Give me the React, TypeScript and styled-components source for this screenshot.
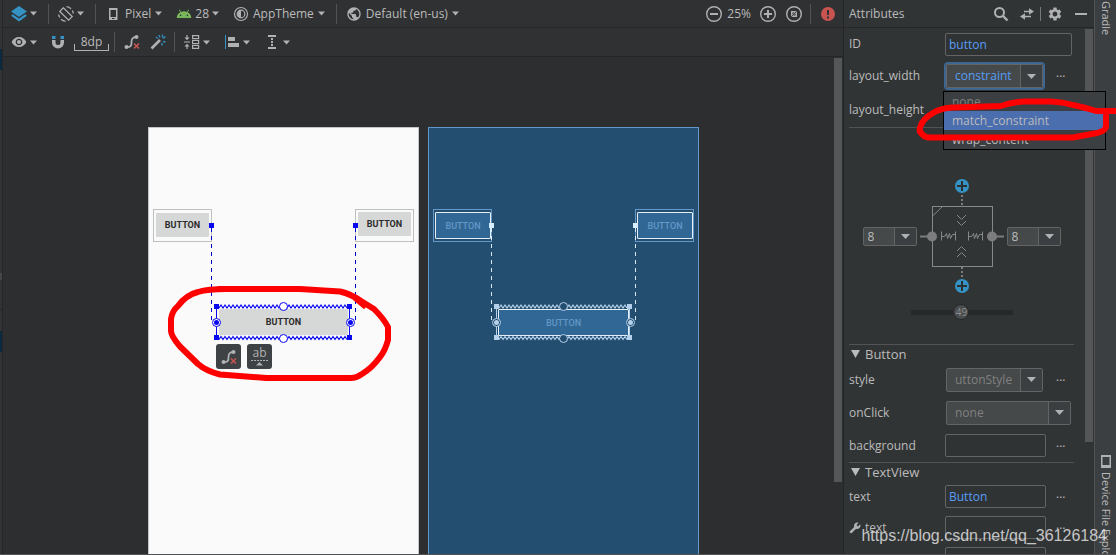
import React from "react";
import styled, { createGlobalStyle } from "styled-components";
import { MdAndroid, MdPublic, MdSettings, MdVisibility, MdBuild } from "react-icons/md";

const Global = createGlobalStyle`
  * { box-sizing: border-box; }
  body { margin: 0; background: #2d2e30; }
  button, input, select { font: inherit; color: inherit; margin: 0; }
  ul { list-style: none; margin: 0; padding: 0; }
`;

const font = `"Open Sans", "Noto Sans", sans-serif`;

const Shell = styled.div`
  position: relative;
  display: grid;
  grid-template-columns: 3px minmax(0, 1fr) 251px 22px;
  grid-template-rows: minmax(0, 1fr);
  height: 100vh;
  overflow: hidden;
  border-bottom: 1px solid #515355;
  font-family: ${font};
  font-size: 12px;
  line-height: 18px;
  color: #bbbbbb;
`;

/* ---------- left edge ---------- */

const Edge = styled.div`
  display: flex;
  flex-direction: column;
  background: #313335;
  border-right: 1px solid #252627;
`;

const EdgeBlock = styled.div<{ $h: number; $bg?: string }>`
  flex: none;
  height: ${(p) => p.$h}px;
  background: ${(p) => p.$bg ?? "transparent"};
`;

/* ---------- editor ---------- */

const Editor = styled.main`
  display: flex;
  flex-direction: column;
  min-width: 0;
  background: #2d2e30;
`;

const Toolbar = styled.div<{ $h: number }>`
  display: flex;
  align-items: center;
  flex: none;
  height: ${(p) => p.$h}px;
  padding-left: 8px;
  background: #2f3133;
  border-bottom: 1px solid #252627;
`;

const ToolButton = styled.button<{ $after?: number; $label?: boolean }>`
  display: inline-flex;
  align-items: center;
  flex: none;
  gap: ${(p) => (p.$label ? 4 : 3)}px;
  padding: 0;
  margin-right: ${(p) => p.$after ?? 0}px;
  border: 0;
  background: none;
  color: #bbbbbb;
  white-space: nowrap;
`;

const Separator = styled.span<{ $tight?: boolean }>`
  flex: none;
  width: 1px;
  height: 20px;
  margin: 0 9px 0 ${(p) => (p.$tight ? 8 : 11)}px;
  background: #515355;
`;

const Spacer = styled.span`
  flex: 1;
`;

const Glyph = styled.svg`
  display: block;
  flex: none;
  width: 16px;
  height: 16px;
`;

const CaretSvg = styled.svg`
  display: block;
  flex: none;
  width: 7px;
  height: 5px;
`;

const GridSize = styled.button`
  position: relative;
  width: 35px;
  height: 18px;
  padding: 0;
  margin: 0 -6px 0 0;
  border: 0;
  background: none;
  color: #bbbbbb;
  line-height: 14px;
  text-align: center;
  &::after {
    content: "";
    position: absolute;
    inset: auto 0 0 0;
    height: 6px;
    border: 1px solid #afb1b3;
    border-top: 0;
  }
`;

const ZoomGroup = styled.div`
  display: flex;
  align-items: center;
  gap: 5px;
  margin-right: 9px;
`;

const Caret = () => (
  <CaretSvg viewBox="0 0 7 5" aria-hidden="true">
    <path d="M0 0.5h7L3.5 4.5z" fill="#afb1b3" />
  </CaretSvg>
);

const Surface = styled.div`
  position: relative;
  flex: 1;
  min-height: 0;
  display: flex;
  justify-content: center;
  align-items: stretch;
  gap: 9px;
  padding: 70px 0 0 1px;
  overflow: hidden;
`;

const SurfaceScroll = styled.div`
  position: absolute;
  top: 1px;
  right: 1px;
  width: 8px;
  height: 424px;
  background: #545658;
`;

const Device = styled.section<{ $blue?: boolean }>`
  position: relative;
  flex: none;
  width: 271px;
  background: ${(p) => (p.$blue ? "#234e6f" : "#fafafa")};
  border: 1px solid ${(p) => (p.$blue ? "#6498c8" : "#c4c4c4")};
  border-bottom: 0;
`;

const Overlay = styled.svg`
  position: absolute;
  top: -1px;
  left: -1px;
  width: 271px;
  height: 428px;
  overflow: visible;
  pointer-events: none;
`;

const Widget = styled.button<{ $x: number; $y: number; $w: number; $h: number; $blue?: boolean }>`
  position: absolute;
  left: ${(p) => p.$x}px;
  top: ${(p) => p.$y}px;
  width: ${(p) => p.$w}px;
  height: ${(p) => p.$h}px;
  padding: 0;
  border: ${(p) => (p.$blue ? "1px solid #e6eef8" : "0")};
  border-radius: 1px;
  background: ${(p) => (p.$blue ? "#316795" : "#d6d7d7")};
  color: ${(p) => (p.$blue ? "#6498c8" : "#2b2b2b")};
  font-family: Roboto, sans-serif;
  font-size: 9px;
  font-weight: ${(p) => (p.$blue ? 500 : 700)};
  line-height: 12px;
  text-align: center;
`;

const ActionBar = styled.div`
  position: absolute;
  left: 67px;
  top: 216px;
  display: flex;
  gap: 6px;
`;

const Action = styled.button`
  display: grid;
  place-items: center;
  width: 25px;
  height: 25px;
  padding: 0;
  border: 0;
  border-radius: 3px;
  background: #3e4244;
  color: #afb1b3;
`;

const Baseline = styled.span`
  display: block;
  width: 17px;
  height: 19px;
  font-size: 12px;
  line-height: 12px;
  text-align: center;
`;

const BaselineSvg = styled.svg`
  display: block;
  width: 17px;
  height: 7px;
`;

const zigzag = (x1: number, x2: number, y: number) => {
  let d = `M${x1} ${y + 1.5}`;
  let up = true;
  for (let x = x1 + 2; x <= x2; x += 2) {
    d += `L${x} ${up ? y - 1.5 : y + 1.5}`;
    up = !up;
  }
  return d;
};

const Constraints = ({ blue }: { blue?: boolean }) => {
  const main = blue ? "#b4d0ea" : "#0808f0";
  const frame = blue ? "#6498c8" : "#bfbfbf";
  const wire = blue ? "#d8ecff" : "#0000c8";
  const hole = blue ? "#234e6f" : "#ffffff";
  return (
    <Overlay viewBox="0 0 271 428" aria-hidden="true">
      <g fill="none" stroke={frame}>
        <rect x="5.5" y="82.5" width="58" height="32" />
        <rect x="207.5" y="82.5" width="58" height="32" />
      </g>
      <g fill="none" stroke={wire} strokeDasharray="4 4">
        <path d="M63.5 101V195.5H66" />
        <path d="M207.5 101V195.5H205" />
      </g>
      <g fill={blue ? "#d8ecff" : "#0808f0"}>
        <rect x="61" y="96" width="5" height="5" />
        <rect x="205" y="96" width="5" height="5" />
      </g>
      <g fill="none" stroke={main} strokeWidth="1.2">
        <path d={zigzag(71, 199, 179.5)} />
        <path d={zigzag(71, 199, 211)} />
      </g>
      <g fill="none" stroke={main}>
        <path d="M68.5 180V211M201.5 180V211" />
      </g>
      <g fill={main}>
        <rect x="66" y="177" width="5" height="5" />
        <rect x="199" y="177" width="5" height="5" />
        <rect x="66" y="208" width="5" height="5" />
        <rect x="199" y="208" width="5" height="5" />
      </g>
      <g fill={hole} stroke={main}>
        <circle cx="135.5" cy="179.5" r="4" />
        <circle cx="135.5" cy="211.5" r="4" />
        <circle cx="68.5" cy="195.5" r="4" />
        <circle cx="202.5" cy="195.5" r="4" />
      </g>
      <g fill={main}>
        <circle cx="68.5" cy="195.5" r="2.5" />
        <circle cx="202.5" cy="195.5" r="2.5" />
      </g>
    </Overlay>
  );
};

const ClearConstraints = () => (
  <Glyph viewBox="0 0 16 16" aria-hidden="true">
    <path d="M2.5 13C7.5 13.5 7.5 11 7.5 8S8 3 13 3" fill="none" stroke="#afb1b3" strokeWidth="1.8" />
    <circle cx="2.5" cy="13" r="2" fill="#afb1b3" />
    <circle cx="12.5" cy="3" r="2" fill="#afb1b3" />
    <path d="M10 9.5l5 5M15 9.5l-5 5" stroke="#c75450" strokeWidth="1.6" />
  </Glyph>
);

/* ---------- attributes ---------- */

const Panel = styled.aside`
  position: relative;
  z-index: 1;
  display: flex;
  flex-direction: column;
  min-width: 0;
  background: #313435;
  border-left: 1px solid #252627;
`;

const PanelHead = styled.header`
  display: flex;
  align-items: center;
  flex: none;
  height: 28px;
  padding: 0 5px;
  border-bottom: 1px solid #252627;
`;

const PanelTitle = styled.h2`
  flex: 1;
  margin: 0;
  font-size: 12px;
  font-weight: 400;
`;

const HeadRule = styled.span`
  width: 1px;
  height: 14px;
  margin-right: 6px;
  background: #77797b;
`;

const PanelBody = styled.div`
  flex: 1;
  min-height: 0;
  padding: 0 20px 0 5px;
`;

const PanelScroll = styled.div`
  position: absolute;
  top: 29px;
  right: 1px;
  width: 8px;
  height: 413px;
  background: #545658;
`;

const Group = styled.section`
  border-bottom: 1px solid #515355;
`;

const GroupTitle = styled.h3`
  display: flex;
  align-items: center;
  gap: 5px;
  height: 18px;
  margin: 0;
  padding-left: 2px;
  font-size: 13px;
  font-weight: 400;
`;

const Row = styled.div<{ $h: number }>`
  position: relative;
  display: grid;
  grid-template-columns: 96px 101px minmax(0, 1fr);
  align-items: center;
  height: ${(p) => p.$h}px;
`;

const RowLabel = styled.label`
  display: flex;
  align-items: center;
  gap: 4px;
`;

const TextField = styled.input<{ $wide?: boolean }>`
  grid-column: ${(p) => (p.$wide ? "2 / 4" : "2")};
  width: ${(p) => (p.$wide ? 127 : 101)}px;
  height: 23px;
  padding: 0 3px;
  border: 1px solid #646464;
  border-radius: 2px;
  background: #2f3334;
  color: #589df6;
  outline: none;
`;

const Combo = styled.div<{ $w: number; $h?: number; $focus?: boolean; $inset?: boolean }>`
  position: relative;
  z-index: ${(p) => (p.$focus ? 3 : "auto")};
  flex: none;
  width: ${(p) => p.$w}px;
  height: ${(p) => p.$h ?? 24}px;
  margin-left: ${(p) => (p.$inset ? 1 : 0)}px;
  border-radius: 2px;
  box-shadow: ${(p) => (p.$focus ? "0 0 0 2px #3d6691" : "none")};
`;

const Select = styled.select<{ $muted?: boolean; $blue?: boolean; $pad?: number }>`
  appearance: none;
  display: block;
  width: 100%;
  height: 100%;
  padding: 0 24px 0 ${(p) => p.$pad ?? 8}px;
  border: 1px solid #646464;
  border-radius: 2px;
  background: #45494a;
  color: ${(p) => (p.$blue ? "#589df6" : p.$muted ? "#808080" : "#bbbbbb")};
  outline: none;
`;

const Drop = styled.span`
  position: absolute;
  top: 1px;
  right: 1px;
  bottom: 1px;
  display: grid;
  place-items: center;
  width: 22px;
  border-left: 1px solid #646464;
  background: #3c3f41;
  pointer-events: none;
`;

const DropArrow = () => (
  <Drop>
    <svg width="9" height="5" viewBox="0 0 9 5" aria-hidden="true">
      <path d="M0 0h9L4.5 5z" fill="#afb1b3" />
    </svg>
  </Drop>
);

const More = styled.button`
  justify-self: start;
  margin-left: 10px;
  padding: 0 0 6px;
  border: 0;
  background: none;
  color: #bbbbbb;
  line-height: 12px;
`;

const Menu = styled.ul`
  position: absolute;
  top: 27px;
  left: -3px;
  width: 163px;
  border: 1px solid #000000;
  background: #3c3f41;
`;

const MenuItem = styled.li<{ $state?: "muted" | "active" }>`
  height: 19px;
  padding-left: 8px;
  line-height: 19px;
  color: ${(p) => (p.$state === "muted" ? "#808080" : "#bbbbbb")};
  background: ${(p) => (p.$state === "active" ? "#4b6eaf" : "transparent")};
`;

const MenuMark = styled.svg`
  position: absolute;
  top: 27px;
  left: -33px;
  width: 203px;
  height: 59px;
  overflow: visible;
  pointer-events: none;
`;

const Inspector = styled.div`
  display: flex;
  flex-direction: column;
  align-items: center;
  gap: 10px;
  padding: 50px 0 24px;
  border-bottom: 1px solid #515355;
`;

const InspectorRow = styled.div`
  display: flex;
  align-items: center;
`;

const BiasBox = styled.div`
  position: relative;
  display: grid;
  place-items: center;
  width: 102px;
  height: 16px;
`;

const Bias = styled.input`
  appearance: none;
  width: 100%;
  height: 16px;
  background: linear-gradient(#262829, #262829) center / 100% 5px no-repeat;
  outline: none;
  &::-webkit-slider-thumb {
    appearance: none;
    width: 16px;
    height: 16px;
    border: 1px solid #262829;
    border-radius: 50%;
    background: #4a4d4e;
  }
`;

const BiasValue = styled.output`
  position: absolute;
  inset: 0;
  color: #8c8e8f;
  font-size: 10px;
  line-height: 17px;
  text-align: center;
  pointer-events: none;
`;

/* ---------- right edge ---------- */

const Dock = styled.nav`
  display: flex;
  flex-direction: column;
  align-items: center;
  gap: 420px;
  padding-top: 1px;
  background: #3c3f41;
  border-left: 1px solid #515355;
  overflow: hidden;
`;

const DockTab = styled.button`
  display: flex;
  align-items: center;
  flex: none;
  gap: 4px;
  padding: 0;
  border: 0;
  background: none;
  color: #bbbbbb;
  font-size: 11px;
  line-height: 20px;
  writing-mode: vertical-rl;
  white-space: nowrap;
`;

const Watermark = styled.span`
  position: absolute;
  z-index: 5;
  right: 9px;
  bottom: 8px;
  color: rgba(225, 225, 225, 0.85);
  font-family: "Liberation Sans", Arial, sans-serif;
  font-size: 16px;
  line-height: 20px;
  pointer-events: none;
`;

const PlusBadge = ({ y }: { y: number }) => (
  <g>
    <circle cx="45" cy={y} r="7" fill="#3592c4" />
    <path d={`M45 ${y - 5}v10M40 ${y}h10`} stroke="#2b3033" strokeWidth="2" />
  </g>
);

const Margin = ({ label }: { label: string }) => (
  <Combo $w={54} $h={19}>
    <Select aria-label={label} $pad={4} defaultValue="8">
      <option>8</option>
      <option>16</option>
    </Select>
    <DropArrow />
  </Combo>
);

const Triangle = () => (
  <svg width="9" height="8" viewBox="0 0 9 8" aria-hidden="true">
    <path d="M0 0h9L4.5 8z" fill="#bbbbbb" />
  </svg>
);

export default function App() {
  return (
    <>
      <Global />
      <Shell>
        <Edge>
          <EdgeBlock $h={49} />
          <EdgeBlock $h={21} $bg="#0d293e" />
          <EdgeBlock $h={203} />
          <EdgeBlock $h={7} $bg="#45484a" />
          <EdgeBlock $h={29} />
          <EdgeBlock $h={1} $bg="#252627" />
          <EdgeBlock $h={21} />
          <EdgeBlock $h={21} $bg="#0d293e" />
        </Edge>

        <Editor>
          <Toolbar $h={28}>
            <ToolButton aria-label="Design surface">
              <Glyph viewBox="0 0 16 16">
                <path d="M8 0L16 5.5 8 11 0 5.5z" fill="#3592c4" />
                <path d="M1.8 8.2L0 9.8 8 15.5l8-5.7-1.8-1.6L8 12.5z" fill="#3592c4" />
              </Glyph>
              <Caret />
            </ToolButton>
            <Separator />
            <ToolButton aria-label="Orientation">
              <Glyph viewBox="0 0 16 16" fill="none" stroke="#afb1b3" strokeWidth="1.3">
                <path d="M5.4 1.8L1.8 5.4 10.6 14.2 14.2 10.6z" />
                <path d="M8.5 0.7a7.3 7.3 0 0 1 4.5 2M14.3 4.5a7.3 7.3 0 0 1 1 3M7.5 15.3a7.3 7.3 0 0 1-4.5-2M1.7 11.5a7.3 7.3 0 0 1-1-3" />
              </Glyph>
              <Caret />
            </ToolButton>
            <Separator />
            <ToolButton $label $after={14}>
              <Glyph viewBox="0 0 16 16">
                <path d="M4 2h8.5v12H4zM5.5 4v7h5.5V4z" fill="#afb1b3" fillRule="evenodd" />
                <path d="M7 12.5h2.5" stroke="#2f3133" />
              </Glyph>
              <span>Pixel</span>
              <Caret />
            </ToolButton>
            <ToolButton $after={14}>
              <Glyph as="span">
                <MdAndroid size={16} color="#78b85a" />
              </Glyph>
              <span>28</span>
              <Caret />
            </ToolButton>
            <ToolButton $label>
              <Glyph viewBox="0 0 16 16">
                <circle cx="8" cy="8" r="6.5" fill="none" stroke="#afb1b3" strokeWidth="1.2" />
                <circle cx="8" cy="8" r="3.8" fill="none" stroke="#afb1b3" strokeWidth="1.2" />
                <path d="M8 4.2a3.800 3.800 0 0 0 0 7.600z" fill="#afb1b3" />
              </Glyph>
              <span>AppTheme</span>
              <Caret />
            </ToolButton>
            <Separator />
            <ToolButton $label>
              <Glyph as="span">
                <MdPublic size={16} color="#afb1b3" />
              </Glyph>
              <span>Default (en-us)</span>
              <Caret />
            </ToolButton>
            <Spacer />
            <ZoomGroup>
              <ToolButton aria-label="Zoom out">
                <Glyph viewBox="0 0 16 16" fill="none" stroke="#afb1b3" strokeWidth="1.4">
                  <circle cx="8" cy="8" r="7.3" />
                  <path d="M4 8h8" strokeWidth="2" />
                </Glyph>
              </ToolButton>
              <span>25%</span>
            </ZoomGroup>
            <ToolButton aria-label="Zoom in" $after={10}>
              <Glyph viewBox="0 0 16 16" fill="none" stroke="#afb1b3" strokeWidth="1.4">
                <circle cx="8" cy="8" r="7.3" />
                <path d="M4 8h8M8 4v8" strokeWidth="2" />
              </Glyph>
            </ToolButton>
            <ToolButton aria-label="Zoom to fit">
              <Glyph viewBox="0 0 16 16">
                <circle cx="8" cy="8" r="7.3" fill="none" stroke="#afb1b3" strokeWidth="1.4" />
                <path d="M5 5h5.5L5 10.5zM11 5.5V11H5.5z" fill="#afb1b3" />
                <path d="M6.5 6.5h2l-2 2zM9.5 7.5v2h-2z" fill="#2f3133" />
              </Glyph>
            </ToolButton>
            <Separator $tight />
            <ToolButton aria-label="Errors" $after={7}>
              <Glyph viewBox="0 0 16 16">
                <circle cx="8" cy="8" r="7" fill="#c75450" />
                <path d="M8 4v5M8 10.5v2" stroke="#2f3133" strokeWidth="2" />
              </Glyph>
            </ToolButton>
          </Toolbar>

          <Toolbar $h={29}>
            <ToolButton aria-label="View options" $after={13}>
              <Glyph as="span">
                <MdVisibility size={16} color="#afb1b3" />
              </Glyph>
              <Caret />
            </ToolButton>
            <ToolButton aria-label="Autoconnect" $after={8}>
              <Glyph viewBox="0 0 16 16">
                <path d="M2 6v2.5a6 6 0 0 0 12 0V6h-3.5v2.5a2.5 2.5 0 0 1-5 0V6z" fill="#afb1b3" />
                <path d="M2 2h3.5v3H2zM10.5 2H14v3h-3.5z" fill="#3592c4" />
              </Glyph>
            </ToolButton>
            <GridSize>8dp</GridSize>
            <Separator />
            <ToolButton aria-label="Clear constraints" $after={10}>
              <ClearConstraints />
            </ToolButton>
            <ToolButton aria-label="Infer constraints">
              <Glyph viewBox="0 0 16 16">
                <path d="M1.5 14.5L10 6" stroke="#afb1b3" strokeWidth="2.6" />
                <path d="M9 1l1 2.5M12.5 0.5v3M15.5 2.5l-2.5 2M13 7.5l2.5 0.5M11.5 9l1 2.5M6 3l2 1.5" stroke="#3592c4" strokeWidth="1.3" />
              </Glyph>
            </ToolButton>
            <Separator $tight />
            <ToolButton aria-label="Pack" $after={14}>
              <Glyph viewBox="0 0 16 16">
                <path d="M3 1v3M3 15v-3M0 8h6" stroke="#afb1b3" strokeWidth="1.2" />
                <path d="M0.5 3.5h5L3 6.2zM0.5 12.5h5L3 9.8z" fill="#afb1b3" />
                <path d="M8.6 1.6h6v3h-6zM8.6 6.5h6v3h-6zM8.6 11.4h6v3h-6z" fill="none" stroke="#afb1b3" strokeWidth="1.2" />
              </Glyph>
              <Caret />
            </ToolButton>
            <ToolButton aria-label="Align" $after={14}>
              <Glyph viewBox="0 0 16 16">
                <path d="M1.5 1v14" stroke="#3592c4" />
                <path d="M4 3h7v4H4zM4 9h11v4H4z" fill="#afb1b3" />
              </Glyph>
              <Caret />
            </ToolButton>
            <ToolButton aria-label="Guidelines">
              <Glyph viewBox="0 0 16 16">
                <path d="M4 2h8M4 14h8" stroke="#afb1b3" strokeWidth="2" />
                <path d="M8 4v9" stroke="#afb1b3" strokeWidth="2" strokeDasharray="2 1" />
              </Glyph>
              <Caret />
            </ToolButton>
          </Toolbar>

          <Surface>
            <Device aria-label="Design">
              <Widget $x={7} $y={85} $w={53} $h={24}>BUTTON</Widget>
              <Widget $x={209} $y={84} $w={53} $h={24}>BUTTON</Widget>
              <Widget $x={70} $y={181} $w={129} $h={26}>BUTTON</Widget>
              <Constraints />
              <ActionBar>
                <Action aria-label="Clear constraints">
                  <ClearConstraints />
                </Action>
                <Action aria-label="Edit baseline">
                  <Baseline>
                    ab
                    <BaselineSvg viewBox="0 0 17 7">
                      <path d="M0 1.5h17" stroke="#afb1b3" strokeDasharray="2 1" />
                      <path d="M8.5 3L12 6.5H5z" fill="#afb1b3" />
                    </BaselineSvg>
                  </Baseline>
                </Action>
              </ActionBar>
              <Overlay viewBox="0 0 271 428" aria-hidden="true">
                <path
                  d="M70 162H152L192 164.5Q203 167 213 174L226 182Q236 192 240 200V213Q237 224 232 230Q224 241 214 247Q208 251 203 251H118L72 247.5Q58 244 50 237L32 219.5Q23 209 23 204V192Q24 184 30 179Q38 168 50 165Q60 162 78 162M205 169L218 180"
                  fill="none"
                  stroke="#ff0000"
                  strokeWidth="6"
                  strokeLinejoin="round"
                />
              </Overlay>
            </Device>
            <Device $blue aria-label="Blueprint">
              <Widget $blue $x={6} $y={84} $w={56} $h={27}>BUTTON</Widget>
              <Widget $blue $x={208} $y={84} $w={56} $h={27}>BUTTON</Widget>
              <Widget $blue $x={69} $y={181} $w={131} $h={27}>BUTTON</Widget>
              <Constraints blue />
            </Device>
            <SurfaceScroll />
          </Surface>
        </Editor>

        <Panel>
          <PanelHead>
            <PanelTitle>Attributes</PanelTitle>
            <ToolButton aria-label="Search" $after={10}>
              <Glyph viewBox="0 0 16 16" fill="none" stroke="#afb1b3">
                <circle cx="6.5" cy="6.5" r="4.5" strokeWidth="2" />
                <path d="M10 10l4.5 4.5" strokeWidth="2.4" />
              </Glyph>
            </ToolButton>
            <ToolButton aria-label="Swap view" $after={5}>
              <Glyph viewBox="0 0 16 16">
                <path d="M5 5.5h6M5 10.5h7" fill="none" stroke="#afb1b3" strokeWidth="1.6" />
                <path d="M10 2.2L15 5.5l-5 3.3zM6 7.2L1 10.5l5 3.3z" fill="#afb1b3" />
              </Glyph>
            </ToolButton>
            <HeadRule />
            <ToolButton aria-label="Settings" $after={10}>
              <Glyph as="span">
                <MdSettings size={16} color="#afb1b3" />
              </Glyph>
            </ToolButton>
            <ToolButton aria-label="Hide">
              <Glyph viewBox="0 0 16 16">
                <path d="M2 8h12" stroke="#afb1b3" strokeWidth="2" />
              </Glyph>
            </ToolButton>
          </PanelHead>

          <PanelBody>
            <Group>
              <Row $h={32}>
                <RowLabel htmlFor="id">ID</RowLabel>
                <TextField id="id" $wide defaultValue="button" />
              </Row>
              <Row $h={32}>
                <RowLabel htmlFor="width">layout_width</RowLabel>
                <Combo $w={97} $focus $inset>
                  <Select id="width" $blue defaultValue="constraint">
                    <option>constraint</option>
                  </Select>
                  <DropArrow />
                  <Menu role="listbox" aria-label="layout_width">
                    <MenuItem role="option" $state="muted">none</MenuItem>
                    <MenuItem role="option" aria-selected="true" $state="active">match_constraint</MenuItem>
                    <MenuItem role="option">wrap_content</MenuItem>
                  </Menu>
                  <MenuMark viewBox="0 0 203 59" aria-hidden="true">
                    <path
                      d="M206 20H183Q170 16 160 14Q150 11 138 10.5H112Q100 11 88 15L40 16.5Q28 17 20 22Q10 28 8 34Q5 40 9 43Q11 46 16 46.5H160L184 42Q193 40 193 35V19"
                      fill="none"
                      stroke="#ff0000"
                      strokeWidth="6"
                      strokeLinejoin="round"
                    />
                  </MenuMark>
                </Combo>
                <More aria-label="Pick layout_width">...</More>
              </Row>
              <Row $h={35}>
                <RowLabel as="span">layout_height</RowLabel>
              </Row>
            </Group>

            <Inspector>
              <InspectorRow>
                <Margin label="Left margin" />
                <svg width="90" height="116" viewBox="0 0 90 116" aria-hidden="true">
                  <g fill="none" stroke="#86888a">
                    <rect x="15.5" y="28.5" width="60" height="60" />
                    <path d="M15.5 38L25.5 28.5" />
                    <path d="M40 37l4.5 4.5L49 37M40 43l4.5 4.5L49 43M40 73l4.5-4.5L49 73M40 79l4.5-4.5L49 79" />
                    <path d="M24.5 53.5v9M38.5 53.5v9M24.5 58.5h3l2-3 1 5 2-5 1 5 2-4h3" />
                    <path d="M51.5 53.5v9M65.5 53.5v9M51.5 58.5h3l2-3 1 5 2-5 1 5 2-4h3" />
                  </g>
                  <path d="M45 17v11M45 89v11" stroke="#7b7d7e" strokeWidth="2" strokeDasharray="2 2" />
                  <path d="M3 58.5h12M75 58.5h12" stroke="#7b7d7e" strokeWidth="2" />
                  <circle cx="15" cy="58.5" r="5" fill="#7b7d7e" />
                  <circle cx="75" cy="58.5" r="5" fill="#7b7d7e" />
                  <PlusBadge y={8} />
                  <PlusBadge y={108} />
                </svg>
                <Margin label="Right margin" />
              </InspectorRow>
              <BiasBox>
                <Bias type="range" min="0" max="100" defaultValue="49" aria-label="Horizontal bias" />
                <BiasValue>49</BiasValue>
              </BiasBox>
            </Inspector>

            <Group>
              <GroupTitle>
                <Triangle />
                Button
              </GroupTitle>
              <Row $h={33}>
                <RowLabel htmlFor="style">style</RowLabel>
                <Combo $w={97} $inset>
                  <Select id="style" $muted defaultValue="uttonStyle">
                    <option>uttonStyle</option>
                  </Select>
                  <DropArrow />
                </Combo>
                <More aria-label="Pick style">...</More>
              </Row>
              <Row $h={33}>
                <RowLabel htmlFor="onclick">onClick</RowLabel>
                <Combo $w={125} $inset>
                  <Select id="onclick" $muted defaultValue="none">
                    <option>none</option>
                  </Select>
                  <DropArrow />
                </Combo>
              </Row>
              <Row $h={33}>
                <RowLabel htmlFor="background">background</RowLabel>
                <TextField id="background" />
                <More aria-label="Pick background">...</More>
              </Row>
            </Group>

            <GroupTitle>
              <Triangle />
              TextView
            </GroupTitle>
            <Row $h={31}>
              <RowLabel htmlFor="text">text</RowLabel>
              <TextField id="text" defaultValue="Button" />
              <More aria-label="Pick text">...</More>
            </Row>
            <Row $h={31}>
              <RowLabel htmlFor="tools-text">
                <MdBuild size={12} color="#afb1b3" transform="scale(-1 1)" />
                text
              </RowLabel>
              <TextField id="tools-text" />
              <More aria-label="Pick design text">...</More>
            </Row>
            <Row $h={31}>
              <span />
              <TextField aria-label="contentDescription" />
            </Row>
          </PanelBody>
          <PanelScroll />
        </Panel>

        <Dock>
          <DockTab>Gradle</DockTab>
          <DockTab>
            <svg width="10" height="13" viewBox="0 0 10 13" aria-hidden="true">
              <path d="M0 0h10v13H0zM1.5 2v8h7V2z" fill="#afb1b3" fillRule="evenodd" />
            </svg>
            Device File Explorer
          </DockTab>
        </Dock>

        <Watermark>https://blog.csdn.net/qq_36126184</Watermark>
      </Shell>
    </>
  );
}
